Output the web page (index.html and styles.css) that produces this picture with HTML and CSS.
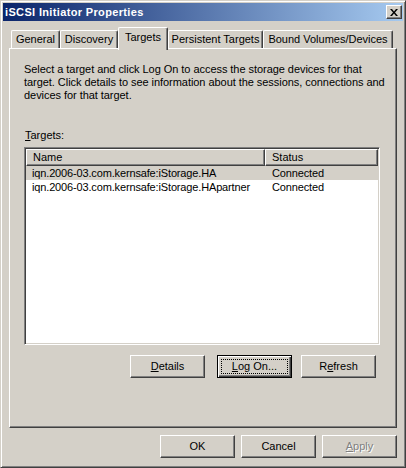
FILE: index.html
```html
<!DOCTYPE html>
<html lang="en">
<head>
    <meta charset="UTF-8">
    <title>iSCSI Initiator Properties</title>
    <link rel="stylesheet" href="styles.css">
</head>
<body>
<div class="window">
    <div class="titlebar">
        <span class="title">iSCSI Initiator Properties</span>
        <button class="close-button">
            <svg width="8" height="7" viewBox="0 0 8 7">
                <path d="M0 0h2l2 2.4L6 0h2L5 3.5 8 7H6L4 4.6 2 7H0l3-3.5z" fill="#000"/>
            </svg>
        </button>
    </div>

    <div class="tabs">
        <div class="tab tab-general">General</div>
        <div class="tab tab-discovery">Discovery</div>
        <div class="tab tab-targets selected">Targets</div>
        <div class="tab tab-persistent">Persistent Targets</div>
        <div class="tab tab-bound">Bound Volumes/Devices</div>
    </div>

    <div class="panel">
        <p class="intro">Select a target and click Log On to access the storage devices for that<br>
            target. Click details to see information about the sessions, connections and<br>
            devices for that target.</p>

        <div class="list-label"><u>T</u>argets:</div>
        <div class="listbox">
            <div class="list-head">
                <div class="col-name">Name</div>
                <div class="col-status">Status</div>
            </div>
            <div class="list-row selected">
                <span class="col-name">iqn.2006-03.com.kernsafe:iStorage.HA</span>
                <span class="col-status">Connected</span>
            </div>
            <div class="list-row">
                <span class="col-name">iqn.2006-03.com.kernsafe:iStorage.HApartner</span>
                <span class="col-status">Connected</span>
            </div>
        </div>

        <div class="panel-buttons">
            <button class="btn"><u>D</u>etails</button>
            <button class="btn btn-default btn-logon"><span class="focus-rect"><u>L</u>og On...</span></button>
            <button class="btn btn-refresh">R<u>e</u>fresh</button>
        </div>
    </div>

    <div class="dialog-buttons">
        <button class="btn">OK</button>
        <button class="btn">Cancel</button>
        <button class="btn disabled"><u>A</u>pply</button>
    </div>
</div>
</body>
</html>
```

FILE: styles.css
```css
body {
    margin: 0;
    padding: 0;
    background-color: #d4d0c8;
    font-family: "Liberation Sans", Arial, sans-serif;
    font-size: 11px;
    color: #000;
}

.window {
    width: 406px;
    height: 468px;
    box-sizing: border-box;
    border: 1px solid;
    border-color: #d4d0c8 #404040 #404040 #d4d0c8;
    box-shadow: inset 1px 1px #fff, inset -1px -1px #808080;
    padding: 2px;
    display: flex;
    flex-direction: column;
    background-color: #d4d0c8;
}

.titlebar {
    height: 18px;
    flex-shrink: 0;
    display: flex;
    align-items: center;
    padding: 0 1px 0 2px;
    background: linear-gradient(to right, #0a246a, #a6caf0);
    color: white;
    font-weight: bold;
}

.title {
    letter-spacing: 0.35px;
}

.close-button {
    margin-left: auto;
    width: 16px;
    height: 14px;
    padding: 0;
    box-sizing: border-box;
    border: 1px solid;
    border-color: #fff #404040 #404040 #fff;
    box-shadow: inset -1px -1px #808080;
    background-color: #d4d0c8;
    display: flex;
    align-items: center;
    justify-content: center;
}

/* tab strip */
.tabs {
    display: flex;
    align-items: flex-end;
    height: 21px;
    margin: 6px 0 0 6px;
    padding-left: 2px;
    flex-shrink: 0;
}

.tab {
    height: 18px;
    box-sizing: border-box;
    border-top: 1px solid #fff;
    border-left: 1px solid #fff;
    border-right: 1px solid #404040;
    box-shadow: inset -1px 0 #808080;
    border-radius: 2px 2px 0 0;
    background-color: #d4d0c8;
    text-align: center;
    line-height: 16px;
    white-space: nowrap;
}

.tab-general { width: 49px; }
.tab-discovery { width: 58px; }
.tab-targets { width: 50px; }
.tab-persistent { width: 95px; }
.tab-bound { width: 130px; }

.tab.selected {
    height: 23px;
    margin-bottom: -2px;
    line-height: 19px;
    z-index: 1;
}

/* property page */
.panel {
    margin-left: 6px;
    width: 388px;
    height: 380px;
    box-sizing: border-box;
    flex-shrink: 0;
    border: 1px solid;
    border-color: #fff #404040 #404040 #fff;
    box-shadow: inset -1px -1px #808080;
    padding: 14px 14px 0 14px;
}

.intro {
    margin: 0;
    line-height: 13px;
    white-space: nowrap;
    letter-spacing: -0.05px;
}

.list-label {
    margin-top: 27px;
    padding-left: 1px;
    line-height: 13px;
}

.listbox {
    margin-top: 5px;
    width: 356px;
    height: 198px;
    box-sizing: border-box;
    border: 1px solid;
    border-color: #808080 #fff #fff #808080;
    box-shadow: inset 1px 1px #404040, inset -1px -1px #d4d0c8;
    padding: 1px;
    background-color: #fff;
}

.list-head {
    display: flex;
    height: 17px;
}

.list-head div {
    box-sizing: border-box;
    border: 1px solid;
    border-color: #fff #404040 #404040 #fff;
    box-shadow: inset -1px -1px #808080;
    background-color: #d4d0c8;
    line-height: 15px;
}

.list-head .col-name {
    width: 239px;
    padding-left: 6px;
}

.list-head .col-status {
    flex: 1;
    padding-left: 6px;
}

.list-row {
    display: flex;
    height: 14px;
    line-height: 14px;
    white-space: nowrap;
    letter-spacing: -0.15px;
}

.list-row .col-name {
    width: 239px;
    box-sizing: border-box;
    padding-left: 6px;
}

.list-row .col-status {
    padding-left: 7px;
}

.list-row.selected {
    background-color: #d4d0c8;
}

/* buttons */
.btn {
    width: 75px;
    height: 23px;
    box-sizing: border-box;
    padding: 0;
    border: 1px solid;
    border-color: #fff #404040 #404040 #fff;
    box-shadow: inset -1px -1px #808080;
    background-color: #d4d0c8;
    font-family: inherit;
    font-size: 11px;
    color: #000;
    line-height: 19px;
    text-align: center;
}

.btn-default {
    border-color: #000;
    box-shadow: inset 1px 1px #fff, inset -1px -1px #404040, inset -2px -2px #808080;
    padding: 3px;
    display: flex;
}

.focus-rect {
    flex: 1;
    border: 1px dotted #000;
    line-height: 13px;
}

.btn.disabled {
    color: #808080;
    text-shadow: 1px 1px #fff;
}

.panel-buttons {
    display: flex;
    justify-content: flex-end;
    margin-top: 10px;
    padding-right: 6px;
}

.btn-logon {
    margin-left: 12px;
}

.btn-refresh {
    margin-left: 9px;
}

.dialog-buttons {
    display: flex;
    justify-content: flex-end;
    gap: 6px;
    margin-top: 7px;
    padding-right: 6px;
}
```
